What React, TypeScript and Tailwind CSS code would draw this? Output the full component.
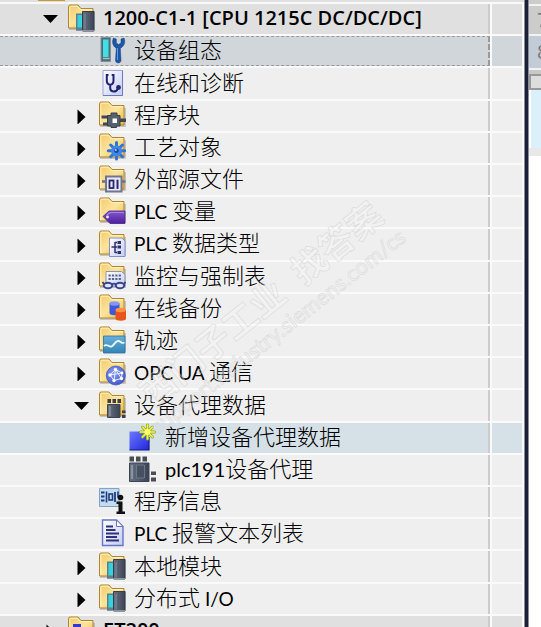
import { useState } from "react";
import type { ReactNode } from "react";

const Folder = ({ children }: { children?: ReactNode }) => (
  <>
    <path d="M2 25h25v-18" fill="none" stroke="#808080" strokeOpacity=".5" strokeWidth="1.5" />
    <path d="M1.5 24V2.5l1-1.5H11l3 3.5h12V24z" fill="url(#folder)" stroke="#b3842a" />
    <path d="M2.8 23V3.2l.8-1h6.8l3 3.500h11.500" fill="none" stroke="#fff3c4" />
    {children}
  </>
);

const Module = () => (
  <>
    <path d="M9 9.5h6.5V26H9z" fill="#5d7f8c" />
    <path d="M10.5 11H15v12.5h-4.5z" fill="#35d3dc" />
    <path d="M15.5 7.5H27V27H15.5z" fill="url(#steel)" stroke="#353d4c" />
    <path d="M18 10v15" stroke="#7f899b" />
    <path d="M9 26.5h18" stroke="#8b93a0" />
  </>
);

const art: Record<string, ReactNode> = {
  station: (
    <Folder>
      <Module />
    </Folder>
  ),
  remote: (
    <Folder>
      <path d="M6 8h8v14H6z" fill="#3038d0" />
    </Folder>
  ),
  config: (
    <>
      <path d="M3 1.5h9.5v24H3z" fill="#526b78" stroke="#7d929c" />
      <path d="M5 3.5h5.5V21H5z" fill="#3fdfe6" />
      <path d="M5 22.5h6.5" stroke="#a9bcc4" strokeWidth="1.5" />
      <path
        d="M15.500 2c-2 4 -.5 8.500 2.800 10.200L17.500 24.500c0 3.200 5.500 3.200 5.500 0L22.300 12.200c3.800-1.700 5.500-6.200 3.700-10.200l-3 1v4l-2.300 1.500L18.300 7V3z"
        fill="#1c56a4"
        stroke="#123f80"
        strokeWidth=".5"
      />
      <path d="M19.500 12v12" stroke="#5d9be0" />
    </>
  ),
  diagnostics: (
    <>
      <path d="M5 1.5h19.5v25H5z" fill="url(#sheet)" stroke="#9aa5d8" />
      <path d="M5 26.5h19.5v-25" fill="none" stroke="#6d79bd" />
      <path
        d="M10.5 6H8.8v5.500c0 5.500 6.700 5.500 6.700 0V6h-1.800M12.200 15.500V19c0 4.500 6 4.500 7.500 1"
        fill="none"
        stroke="#23236f"
        strokeWidth="2"
      />
      <circle cx="20.5" cy="18.500" r="2.400" fill="#23236f" />
    </>
  ),
  blocks: (
    <Folder>
      <path d="M3.500 14.500h7v3h-7zM5 21.500h6v3H5zM21 17.500h7v3.500h-7z" fill="#3f4853" />
      <path
        d="M9.500 14.500H13V12h6v2.500h3V25h-3.500v1.500H13V25H9.500z"
        fill="#56616e"
        stroke="#363e49"
      />
      <path d="M14.500 17.500H19V22h-4.500z" fill="#fff" />
    </Folder>
  ),
  technology: (
    <Folder>
      <g stroke="#2f73d8" strokeWidth="3" strokeLinecap="round">
        <path d="M18.5 9.500V26M10.300 17.800h16.500M12.700 12l11.700 11.700M24.400 12L12.700 23.700" />
      </g>
      <circle cx="18.5" cy="17.800" r="5.500" fill="#3f86ea" />
      <circle cx="18.5" cy="17.800" r="2.300" fill="#1c469c" />
      <circle cx="17.800" cy="17" r="1" fill="#a8d0ff" />
    </Folder>
  ),
  sources: (
    <Folder>
      <path d="M4 16.500h4M23 16.500h4.500" stroke="#6b7280" strokeWidth="2.500" />
      <path d="M8 11.500h15.500v15H8z" fill="#e9e9f6" stroke="#70748c" strokeWidth="2" />
      <rect x="11.5" y="15.5" width="4" height="7.5" fill="none" stroke="#27276e" strokeWidth="1.800" />
      <path d="M19.500 14.700v9.200" stroke="#27276e" strokeWidth="2" />
    </Folder>
  ),
  tags: (
    <Folder>
      <path d="M5 19.500l6-5.500h16v12.500H12z" fill="url(#purple)" stroke="#47208c" strokeWidth=".8" />
      <path d="M9 18l3-2.500h14" fill="none" stroke="#a583e4" strokeWidth="1.200" />
      <circle cx="9.500" cy="20" r="1.400" fill="#efe6ff" />
    </Folder>
  ),
  types: (
    <Folder>
      <path d="M11.500 8H24l3 3v15.500H11.500z" fill="url(#sheet)" stroke="#8390c8" />
      <path d="M13.500 17h3M17 12v11M17 12.500h2M17 17h2M17 22.500h2" stroke="#30306f" strokeWidth="1.500" />
      <path d="M19.500 11H23v3h-3.500zM19.500 15.500H23v3h-3.500zM19.500 21H23v3h-3.500z" fill="#30306f" />
    </Folder>
  ),
  watch: (
    <Folder>
      <path d="M8 9.500h15.500l3.500 3V24H8z" fill="url(#sheet)" stroke="#8d93b8" />
      <path
        d="M10.500 13.500h13M10.500 17h13"
        stroke="#5b618c"
        strokeWidth="1.800"
        strokeDasharray="2.200 1.200"
      />
      <g fill="#dfe6fb" stroke="#39458e" strokeWidth="2">
        <ellipse cx="10" cy="23.500" rx="4.200" ry="2.800" />
        <ellipse cx="22" cy="23.500" rx="4.200" ry="2.800" />
        <path d="M14 22.500c1-1 3-1 4 0M6 22l-1.500-2M26 22l1.500-2" fill="none" />
      </g>
    </Folder>
  ),
  backup: (
    <Folder>
      <path d="M11.500 9.500v9.500c0 3 10 3 10 0V9.500z" fill="#3d57dd" />
      <ellipse cx="16.500" cy="9.500" rx="5" ry="2.200" fill="#8297f8" />
      <path d="M17.500 16v8.500c0 3 10.500 3 10.500 0V16z" fill="#e8541a" />
      <ellipse cx="22.750" cy="16" rx="5.250" ry="2.200" fill="#ff8f4a" />
    </Folder>
  ),
  traces: (
    <Folder>
      <path d="M5.500 10H27v17H5.500z" fill="url(#trace)" stroke="#2c6f9c" strokeWidth=".8" />
      <path
        d="M6 20c3-3 5 1.500 7.500.5s4-6 7-5.500 3 3 6 1.500"
        fill="none"
        stroke="#eefaff"
        strokeWidth="1.800"
      />
    </Folder>
  ),
  opc: (
    <Folder>
      <circle cx="17.800" cy="17.500" r="9.500" fill="url(#globe)" stroke="#4457bd" strokeWidth=".8" />
      <path
        d="M17.500 11.500L12 17l4 5.500 7.500-2 .5-5.500zl-1.500 11M12 17l12-2M17.500 11.500l6 9"
        fill="none"
        stroke="#e6ecff"
      />
      <g fill="#fff">
        <circle cx="17.500" cy="11.500" r="1.700" />
        <circle cx="12" cy="17" r="1.700" />
        <circle cx="16" cy="22.500" r="1.700" />
        <circle cx="23.500" cy="20.500" r="1.700" />
        <circle cx="24" cy="15" r="1.400" />
      </g>
    </Folder>
  ),
  proxies: (
    <Folder>
      <path d="M9.500 8H13v4H9.500zM14.500 8H18v4h-3.500zM19.500 8H23v4h-3.500z" fill="#3e3e44" />
      <path d="M9.500 13.500H22v13H9.500z" fill="url(#steel)" stroke="#3d4552" />
      <path d="M12 15v10" stroke="#98a1b0" strokeWidth="1.200" />
      <path d="M24 19.500h3.500V22H24zM24 24h3.500v3H24z" fill="#3e3e44" />
    </Folder>
  ),
  add: (
    <>
      <path d="M.5 8.500H20V27H.5z" fill="url(#blue)" />
      <path d="M.5 27H20V14" fill="none" stroke="#161b84" strokeWidth="1.200" />
      <g stroke="#8fae2c" strokeWidth="3" strokeLinecap="round">
        <path d="M18.500 2v14M11.500 9h14M13.500 4l10 10M23.500 4l-10 10" />
      </g>
      <g stroke="#f4f23c" strokeWidth="1.600" strokeLinecap="round">
        <path d="M18.500 2v14M11.500 9h14M13.500 4l10 10M23.500 4l-10 10" />
      </g>
      <circle cx="18.500" cy="9" r="3" fill="#ffff7a" />
    </>
  ),
  plc: (
    <>
      <path d="M.5 1.500H5v5H.5zM7 1.500h4.500v5H7zM13.500 1.500H18v5h-4.500z" fill="#484c55" />
      <path d="M.5 8H20v18.500H.5z" fill="url(#steel)" stroke="#3d4552" />
      <path d="M3 10v14" stroke="#9aa3b2" strokeWidth="1.500" />
      <path d="M7.500 10h8v13h-8z" fill="#465060" stroke="#76808f" strokeWidth=".8" />
      <path d="M22 16.500h5V20h-5zM22 22.500h5v4h-5z" fill="#484c55" />
    </>
  ),
  info: (
    <>
      <path d="M1.500 1.500H21v18H1.500z" fill="#c3dbef" stroke="#7fa3c4" />
      <path d="M3 5.500h3.500M3 9.500h3.500M3 13.500h3.500" stroke="#1f3d80" strokeWidth="1.800" />
      <path d="M8.500 4.500v11M20 4.500v6" stroke="#1f3d80" strokeWidth="1.600" />
      <rect x="11" y="7" width="3.5" height="6" fill="none" stroke="#1f3d80" strokeWidth="1.600" />
      <path d="M17 5v10" stroke="#1f3d80" strokeWidth="1.800" />
      <circle cx="22.500" cy="10.500" r="2.800" fill="#111" />
      <path d="M18.500 14.500h6v10H27V27h-8.500v-2.500h2V17h-2z" fill="#111" />
    </>
  ),
  alarms: (
    <>
      <path d="M4.500 1h14L25 7.500v19H4.500z" fill="url(#sheet)" stroke="#6a74c4" strokeWidth="1.400" />
      <path d="M18.500 1v6.500H25z" fill="#fff" stroke="#6a74c4" />
      <path
        d="M8 7.500h7M8 11h9.500M8 14.500h13M8 18h11M8 21.500h13"
        stroke="#30307c"
        strokeWidth="1.800"
      />
    </>
  ),
};

const TreeIcon = ({ name }: { name: string }) => (
  <svg viewBox="0 0 28 28" className="size-7 shrink-0" aria-hidden="true">
    {art[name]}
  </svg>
);

type TreeNode = { icon: string; label: ReactNode; level: number; open?: boolean; group?: boolean };

// Latin runs are set smaller than the Chinese glyphs around them
const En = ({ children }: { children: ReactNode }) => (
  <span className="text-[19px] font-normal">{children}</span>
);

const nodes: TreeNode[] = [
  { icon: "station", label: "1200-C1-1 [CPU 1215C DC/DC/DC]", level: 0, group: true, open: true },
  { icon: "config", label: "设备组态", level: 1 },
  { icon: "diagnostics", label: "在线和诊断", level: 1 },
  { icon: "blocks", label: "程序块", level: 1, group: true },
  { icon: "technology", label: "工艺对象", level: 1, group: true },
  { icon: "sources", label: "外部源文件", level: 1, group: true },
  { icon: "tags", label: <><En>PLC </En>变量</>, level: 1, group: true },
  { icon: "types", label: <><En>PLC </En>数据类型</>, level: 1, group: true },
  { icon: "watch", label: "监控与强制表", level: 1, group: true },
  { icon: "backup", label: "在线备份", level: 1, group: true },
  { icon: "traces", label: "轨迹", level: 1, group: true },
  { icon: "opc", label: <><En>OPC UA </En>通信</>, level: 1, group: true },
  { icon: "proxies", label: "设备代理数据", level: 1, group: true, open: true },
  { icon: "add", label: "新增设备代理数据", level: 2 },
  { icon: "plc", label: <><span className="text-xl font-normal">plc191</span>设备代理</>, level: 2 },
  { icon: "info", label: "程序信息", level: 1 },
  { icon: "alarms", label: <><En>PLC </En>报警文本列表</>, level: 1 },
  { icon: "station", label: "本地模块", level: 1, group: true },
  { icon: "station", label: <>分布式<En> I/O</En></>, level: 1, group: true },
  { icon: "remote", label: "ET200", level: 0, group: true },
];

const indent = ["pl-[41px]", "pl-[72px]", "pl-[129px]"];

const Caret = ({ open }: { open?: boolean }) => (
  <svg viewBox="0 0 18 18" className="size-[18px]" aria-hidden="true">
    <path d={open ? "M2 6h15l-7.500 8z" : "M5.500 3.500L13.500 11l-8 7.500z"} fill="#000" />
  </svg>
);

const Gradients = () => (
  <svg className="absolute size-0" aria-hidden="true">
    <defs>
      <linearGradient id="folder" x1="0" y1="0" x2="1" y2="1">
        <stop offset="0" stopColor="#f3cb69" />
        <stop offset=".5" stopColor="#fce39c" />
        <stop offset="1" stopColor="#ecb840" />
      </linearGradient>
      <linearGradient id="steel" x1="0" y1="0" x2="1" y2="0">
        <stop offset="0" stopColor="#687283" />
        <stop offset="1" stopColor="#3a4352" />
      </linearGradient>
      <linearGradient id="sheet" x1="0" y1="0" x2="1" y2="1">
        <stop offset="0" stopColor="#ffffff" />
        <stop offset="1" stopColor="#c3cdf6" />
      </linearGradient>
      <linearGradient id="purple" x1="0" y1="0" x2="0" y2="1">
        <stop offset="0" stopColor="#8458d0" />
        <stop offset="1" stopColor="#4c1f9c" />
      </linearGradient>
      <linearGradient id="trace" x1="0" y1="0" x2="0" y2="1">
        <stop offset="0" stopColor="#66b0dc" />
        <stop offset="1" stopColor="#3384b4" />
      </linearGradient>
      <linearGradient id="blue" x1="0" y1="0" x2="1" y2="1">
        <stop offset="0" stopColor="#6b78ff" />
        <stop offset="1" stopColor="#2126d8" />
      </linearGradient>
      <radialGradient id="globe" cx=".4" cy=".35" r=".7">
        <stop offset="0" stopColor="#8ba0f5" />
        <stop offset="1" stopColor="#4055c8" />
      </radialGradient>
    </defs>
  </svg>
);

const Watermark = () => (
  <svg
    viewBox="0 0 300 280"
    className="pointer-events-none absolute top-[180px] left-[130px] h-[280px] w-[300px] overflow-visible"
    aria-hidden="true"
  >
    <g fill="#ffffff" fillOpacity=".2" stroke="#d0d0d0" strokeOpacity=".6" strokeWidth=".8">
      <g transform="translate(23 228) rotate(-39)" fontSize="35" fontWeight="700">
        <text>西门子工业</text>
        <text x="194">找答案</text>
      </g>
      <text transform="translate(28 255) rotate(-38)" fontSize="22">
        support.industry.siemens.com/cs
      </text>
    </g>
  </svg>
);

export default function App() {
  const [selected, setSelected] = useState(1);

  const rowColor = (node: TreeNode, i: number) => {
    if (i === selected) return "bg-[#d1d6da]";
    if (node.icon === "add") return "bg-[#d5e1e7]";
    return node.level === 0 ? "bg-[#e0e0e0]" : "bg-[#efefef]";
  };

  return (
    <div className="relative flex h-screen overflow-hidden bg-white font-['Lato','Noto_Sans_CJK_SC',sans-serif] text-black">
      <Gradients />
      <main className="min-w-0 flex-1">
        <div className="flex h-1 border-b-2 border-[#fafafa] bg-[#e0e0e0] pl-[38px]">
          <span className="h-px w-[27px] bg-[#c39a3c]" />
        </div>
        <ul role="tree" aria-label="项目树">
          {nodes.map((node, i) => (
            <li
              key={i}
              role="treeitem"
              aria-level={node.level + 1}
              aria-selected={i === selected}
              aria-expanded={node.group ? !!node.open : undefined}
              onClick={() => setSelected(i)}
              className={`flex h-8 border-b-2 border-[#fafafa] nth-[5n+3]:h-[33px] ${rowColor(node, i)}`}
            >
              <div
                className={`flex min-w-0 flex-1 items-center gap-2 pb-[2px] ${indent[node.level]} ${
                  i === selected
                    ? "border-y border-r-2 border-dashed border-[#9a9a9a]"
                    : "border-r-2 border-[#cccccc]"
                }`}
              >
                {node.level < 2 && (
                  <span className="w-[18px] shrink-0">{node.group && <Caret open={node.open} />}</span>
                )}
                <TreeIcon name={node.icon} />
                <span
                  className={`whitespace-nowrap ${
                    node.level === 0
                      ? "font-['Open_Sans'] text-xl font-semibold"
                      : "text-[22px] leading-7 font-light"
                  }`}
                >
                  {node.label}
                </span>
              </div>
              <div className="w-[34px] shrink-0 border-x-2 border-[#fafafa]" />
            </li>
          ))}
        </ul>
      </main>

      <div className="w-[5px] shrink-0 border-x border-[#8b8e98] bg-[#1a2035]" />

      <aside className="w-3 shrink-0 overflow-hidden font-['Open_Sans'] text-xl text-[#777777]">
        <div className="h-1 bg-[#cccccc]" />
        <div className="h-8 border-y-2 border-[#f2f2f2] bg-[#cccccc] pl-2 leading-7">7</div>
        <div className="h-[34px] border-b-2 border-[#f2f2f2] bg-[#c2ccd8] pl-2 leading-8">8</div>
        <div className="h-1 bg-[#c8c8c8]" />
        <div className="h-4 border-2 border-r-0 border-[#999999] bg-[#dddddd]" />
        <div className="ml-[2px] h-[58px] bg-[#daf0fa]" />
        <div className="h-2 bg-[#e8e8e8]" />
      </aside>

      <Watermark />
    </div>
  );
}
